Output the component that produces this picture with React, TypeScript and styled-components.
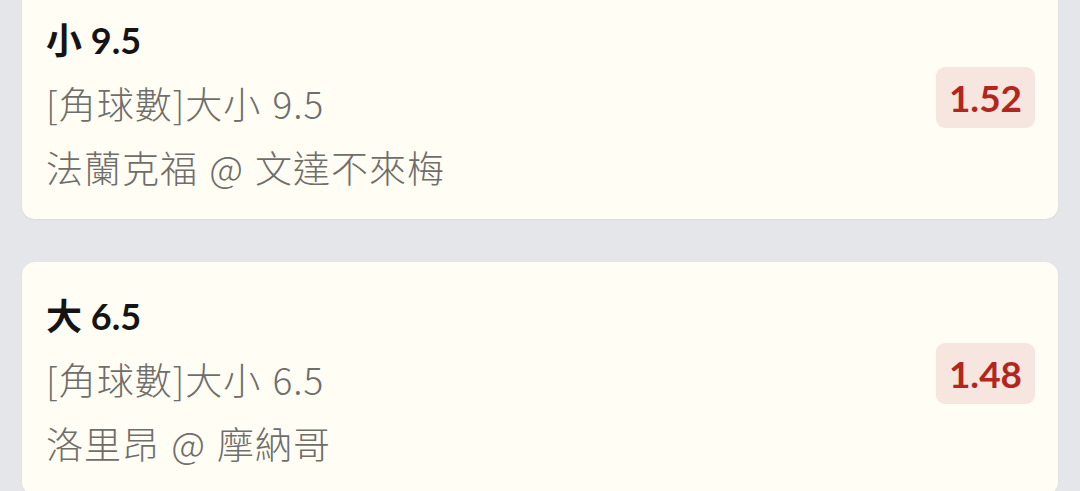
import React from 'react';
import styled, { createGlobalStyle } from 'styled-components';

interface Bet {
  pick: string;
  market: string;
  match: string;
  odds: string;
}

const bets: Bet[] = [
  { pick: '小 9.5', market: '[角球數]大小 9.5', match: '法蘭克福 @ 文達不來梅', odds: '1.52' },
  { pick: '大 6.5', market: '[角球數]大小 6.5', match: '洛里昂 @ 摩納哥', odds: '1.48' },
];

const GlobalStyle = createGlobalStyle`
  html, body {
    margin: 0;
    padding: 0;
    background: #e5e6e9;
    overflow: hidden;
  }
  body {
    font-family: Lato, "Noto Sans CJK TC", sans-serif;
  }
`;

const List = styled.div`
  display: flex;
  flex-direction: column;
  gap: 43px;
  padding: 0 22px;
  margin-top: -14px;
`;

const Card = styled.div`
  display: flex;
  align-items: center;
  justify-content: space-between;
  background: #fffdf4;
  border-radius: 13px;
  box-shadow: 0 1px 2px rgba(0, 0, 0, 0.05);
  padding: 23px 23px 20px 24px;
`;

const Info = styled.div`
  display: flex;
  flex-direction: column;
`;

const Pick = styled.div`
  font-size: 36px;
  font-weight: 700;
  color: #141414;
  line-height: 62px;
`;

const Detail = styled.div`
  font-family: "Noto Sans CJK TC", sans-serif;
  font-size: 37px;
  font-weight: 300;
  color: #6e6e6a;
  line-height: 64px;
  letter-spacing: 1px;
  word-spacing: 2px;
`;

const Odds = styled.div`
  background: #f7e6df;
  color: #b3261e;
  font-size: 37px;
  font-weight: 700;
  border-radius: 9px;
  width: 99px;
  height: 61px;
  display: flex;
  align-items: center;
  justify-content: center;
  margin-bottom: 14px;
`;

export default function App() {
  return (
    <>
      <GlobalStyle />
      <List>
        {bets.map((b) => (
          <Card key={b.pick}>
            <Info>
              <Pick>{b.pick}</Pick>
              <Detail>{b.market}</Detail>
              <Detail>{b.match}</Detail>
            </Info>
            <Odds>{b.odds}</Odds>
          </Card>
        ))}
      </List>
    </>
  );
}
